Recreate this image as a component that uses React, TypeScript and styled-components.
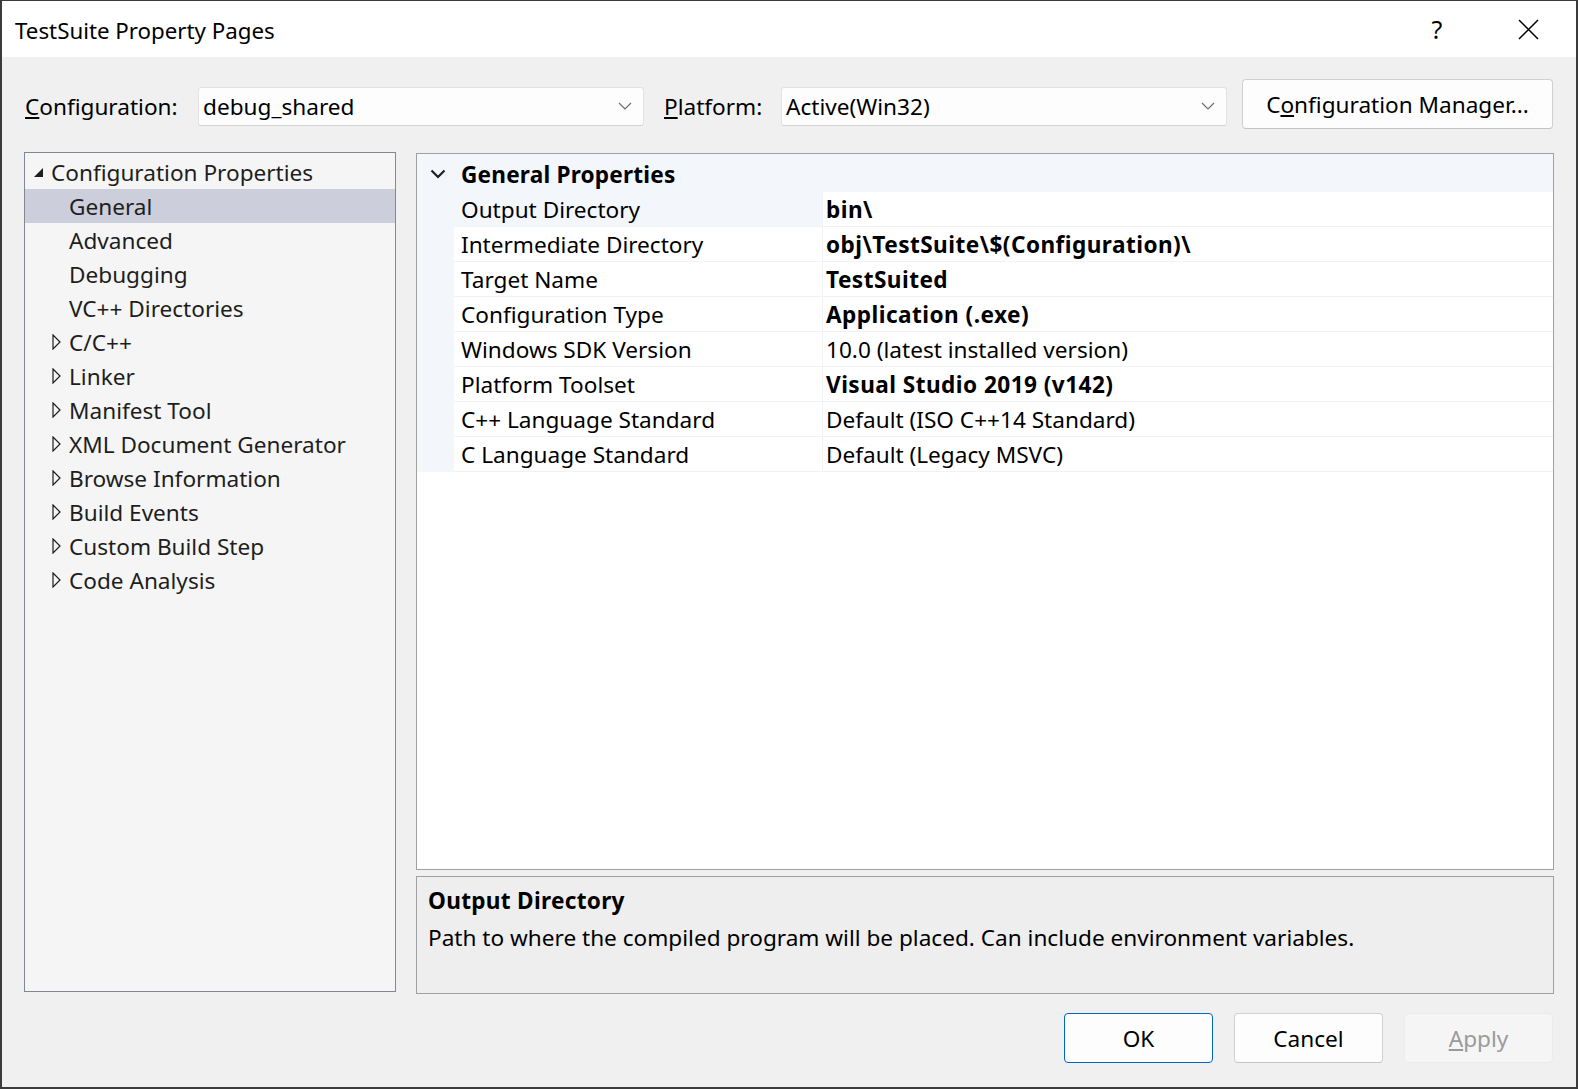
import React from "react";
import styled, { createGlobalStyle } from "styled-components";

const Global = createGlobalStyle`
  html, body { margin: 0; padding: 0; background: #3b3b3b; }
  body { font-family: "Noto Sans", "Open Sans", sans-serif; color: #000; }
  * { box-sizing: border-box; }
`;

const Window = styled.div`
  width: 1578px;
  height: 1089px;
  border: 2px solid #3b3b3b;
  border-top-width: 1px;
  background: #f0f0f0;
  display: flex;
  flex-direction: column;
  font-size: 22.6px;
`;

const TitleBar = styled.div`
  height: 56px;
  background: #ffffff;
  display: flex;
  align-items: center;
  padding-left: 13px;
  font-size: 22.3px;
`;

const Title = styled.div`
  flex: 1;
  padding-top: 2px;
`;

const TitleButton = styled.div<{ $w: number }>`
  width: ${(p) => p.$w}px;
  height: 56px;
  display: flex;
  align-items: center;
  justify-content: center;
  font-size: 25px;
`;

const Body = styled.div`
  flex: 1;
  display: flex;
  flex-direction: column;
  padding: 22px 22px 0 22px;
`;

const Toolbar = styled.div`
  display: flex;
  align-items: center;
  height: 50px;
`;

const Label = styled.div<{ $w: number; $pad?: number }>`
  width: ${(p) => p.$w}px;
  flex-shrink: 0;
  padding-left: ${(p) => p.$pad ?? 0}px;
  padding-top: 4px;
  white-space: nowrap;
`;

const Combo = styled.div`
  width: 446px;
  flex-shrink: 0;
  height: 39px;
  margin-top: 4px;
  background: #fdfdfd;
  border: 1px solid #e3e3e3;
  border-bottom-color: #d4d4d4;
  border-radius: 3px;
  display: flex;
  align-items: center;
  padding-left: 4px;
  padding-right: 11px;
`;

const ComboText = styled.div`
  flex: 1;
`;

const Button = styled.div<{ $variant?: "primary" | "disabled" }>`
  height: 50px;
  flex-shrink: 0;
  border-radius: 4px;
  display: flex;
  align-items: center;
  justify-content: center;
  background: ${(p) => (p.$variant === "disabled" ? "#f5f5f5" : "#fdfdfd")};
  color: ${(p) => (p.$variant === "disabled" ? "#9a9a9a" : "#000")};
  border: 1px solid
    ${(p) =>
      p.$variant === "primary" ? "#0067c0" : p.$variant === "disabled" ? "#ebebeb" : "#d0d0d0"};
  border-bottom-color: ${(p) =>
    p.$variant === "primary" ? "#0067c0" : p.$variant === "disabled" ? "#ebebeb" : "#c4c4c4"};
`;

const ManagerButton = styled(Button)`
  width: 311px;
  margin-left: 15px;
`;

const Main = styled.div`
  margin-top: 23px;
  display: grid;
  grid-template-columns: 372px 1fr;
  column-gap: 20px;
  height: 842px;
`;

const Tree = styled.div`
  background: #f5f5f5;
  border: 1px solid #828790;
  padding-top: 2px;
  height: 840px;
`;

const TreeRow = styled.div<{ $depth: number; $selected?: boolean }>`
  height: 34px;
  display: flex;
  align-items: center;
  padding-left: ${(p) => (p.$depth === 0 ? 8 : 27)}px;
  background: ${(p) => (p.$selected ? "#cccedb" : "transparent")};
  color: #1e1e1e;
  white-space: nowrap;
`;

const Expander = styled.span<{ $w?: number }>`
  width: ${(p) => p.$w ?? 17}px;
  display: inline-flex;
  justify-content: flex-start;
  align-items: center;
`;

const Spacer = styled.span`
  width: 17px;
  display: inline-block;
`;

const RightCol = styled.div`
  display: flex;
  flex-direction: column;
  gap: 6px;
  padding-top: 1px;
`;

const Grid = styled.div`
  flex: 1;
  background: #ffffff;
  border: 1px solid #a0a0a0;
  display: flex;
  flex-direction: column;
`;

const GroupHeader = styled.div`
  height: 38px;
  padding-top: 2px;
  background: #f3f6fb;
  display: flex;
  align-items: center;
  font-weight: 700;
  letter-spacing: 0.2px;
`;

const Chevron = styled.span`
  width: 44px;
  display: inline-flex;
  justify-content: center;
  align-items: center;
  padding-right: 2px;
`;

const PropRow = styled.div`
  height: 35px;
  display: grid;
  grid-template-columns: 37px 368px 1fr;
`;

const Margin = styled.div`
  background: #f3f6fb;
`;

const NameCell = styled.div<{ $selected?: boolean }>`
  background: ${(p) => (p.$selected ? "#f3f6fb" : "#ffffff")};
  border-bottom: 1px solid #f0f2f5;
  display: flex;
  align-items: center;
  padding-left: 7px;
  white-space: nowrap;
`;

const ValueCell = styled.div<{ $bold?: boolean }>`
  border-left: 1px solid #f0f2f5;
  border-bottom: 1px solid #f0f2f5;
  display: flex;
  align-items: center;
  padding-left: 3px;
  font-weight: ${(p) => (p.$bold ? 700 : 400)};
  letter-spacing: ${(p) => (p.$bold ? "0.45px" : "0")};
  white-space: nowrap;
`;

const Description = styled.div`
  height: 118px;
  background: #eeeeee;
  border: 1px solid #a0a0a0;
  padding: 5px 11px;
`;

const DescTitle = styled.div`
  font-weight: 700;
  letter-spacing: 0.3px;
  height: 37px;
  display: flex;
  align-items: center;
`;

const DescText = styled.div`
  height: 36px;
  display: flex;
  align-items: center;
`;

const Footer = styled.div`
  display: flex;
  justify-content: flex-end;
  gap: 21px;
  margin-top: 19px;
  padding-right: 1px;
`;

const DialogButton = styled(Button)`
  width: 149px;
`;

const Caret = ({ color = "#6d6d6d" }: { color?: string }) => (
  <svg width="14" height="8" viewBox="0 0 14 8">
    <path d="M1 1 L7 7 L13 1" fill="none" stroke={color} strokeWidth="1.2" />
  </svg>
);

const OpenTri = () => (
  <svg width="11" height="11" viewBox="0 0 11 11">
    <path d="M10 1 L10 10 L1 10 Z" fill="#1e1e1e" />
  </svg>
);

const ClosedTri = () => (
  <svg width="9" height="16" viewBox="0 0 9 16">
    <path d="M1 1 L8 8 L1 15 Z" fill="none" stroke="#1e1e1e" strokeWidth="1.2" />
  </svg>
);

const treeItems: { label: string; expandable: boolean; selected?: boolean }[] = [
  { label: "General", expandable: false, selected: true },
  { label: "Advanced", expandable: false },
  { label: "Debugging", expandable: false },
  { label: "VC++ Directories", expandable: false },
  { label: "C/C++", expandable: true },
  { label: "Linker", expandable: true },
  { label: "Manifest Tool", expandable: true },
  { label: "XML Document Generator", expandable: true },
  { label: "Browse Information", expandable: true },
  { label: "Build Events", expandable: true },
  { label: "Custom Build Step", expandable: true },
  { label: "Code Analysis", expandable: true },
];

const props: { name: string; value: string; bold: boolean; selected?: boolean }[] = [
  { name: "Output Directory", value: "bin\\", bold: true, selected: true },
  { name: "Intermediate Directory", value: "obj\\TestSuite\\$(Configuration)\\", bold: true },
  { name: "Target Name", value: "TestSuited", bold: true },
  { name: "Configuration Type", value: "Application (.exe)", bold: true },
  { name: "Windows SDK Version", value: "10.0 (latest installed version)", bold: false },
  { name: "Platform Toolset", value: "Visual Studio 2019 (v142)", bold: true },
  { name: "C++ Language Standard", value: "Default (ISO C++14 Standard)", bold: false },
  { name: "C Language Standard", value: "Default (Legacy MSVC)", bold: false },
];

export default function App() {
  return (
    <>
      <Global />
      <Window>
        <TitleBar>
          <Title>TestSuite Property Pages</Title>
          <TitleButton $w={86}>?</TitleButton>
          <TitleButton $w={96}>
            <svg width="21" height="21" viewBox="0 0 21 21">
              <path d="M1 1 L20 20 M20 1 L1 20" stroke="#000" strokeWidth="1.5" fill="none" />
            </svg>
          </TitleButton>
        </TitleBar>
        <Body>
          <Toolbar>
            <Label $w={174} $pad={1}>
              <u>C</u>onfiguration:
            </Label>
            <Combo>
              <ComboText>debug_shared</ComboText>
              <Caret />
            </Combo>
            <Label $w={137} $pad={20}>
              <u>P</u>latform:
            </Label>
            <Combo>
              <ComboText>Active(Win32)</ComboText>
              <Caret />
            </Combo>
            <ManagerButton>
              C<u>o</u>nfiguration Manager...
            </ManagerButton>
          </Toolbar>
          <Main>
            <Tree>
              <TreeRow $depth={0}>
                <Expander $w={18}>
                  <OpenTri />
                </Expander>
                Configuration Properties
              </TreeRow>
              {treeItems.map((t) => (
                <TreeRow key={t.label} $depth={1} $selected={t.selected}>
                  {t.expandable ? (
                    <Expander>
                      <ClosedTri />
                    </Expander>
                  ) : (
                    <Spacer />
                  )}
                  {t.label}
                </TreeRow>
              ))}
            </Tree>
            <RightCol>
              <Grid>
                <GroupHeader>
                  <Chevron>
                    <svg width="16" height="10" viewBox="0 0 16 10">
                      <path d="M1.5 1.5 L8 8 L14.5 1.5" fill="none" stroke="#1e1e1e" strokeWidth="2.2" />
                    </svg>
                  </Chevron>
                  General Properties
                </GroupHeader>
                {props.map((p) => (
                  <PropRow key={p.name}>
                    <Margin />
                    <NameCell $selected={p.selected}>{p.name}</NameCell>
                    <ValueCell $bold={p.bold}>{p.value}</ValueCell>
                  </PropRow>
                ))}
              </Grid>
              <Description>
                <DescTitle>Output Directory</DescTitle>
                <DescText>
                  Path to where the compiled program will be placed. Can include environment variables.
                </DescText>
              </Description>
            </RightCol>
          </Main>
          <Footer>
            <DialogButton $variant="primary">OK</DialogButton>
            <DialogButton>Cancel</DialogButton>
            <DialogButton $variant="disabled">
              <u>A</u>pply
            </DialogButton>
          </Footer>
        </Body>
      </Window>
    </>
  );
}
